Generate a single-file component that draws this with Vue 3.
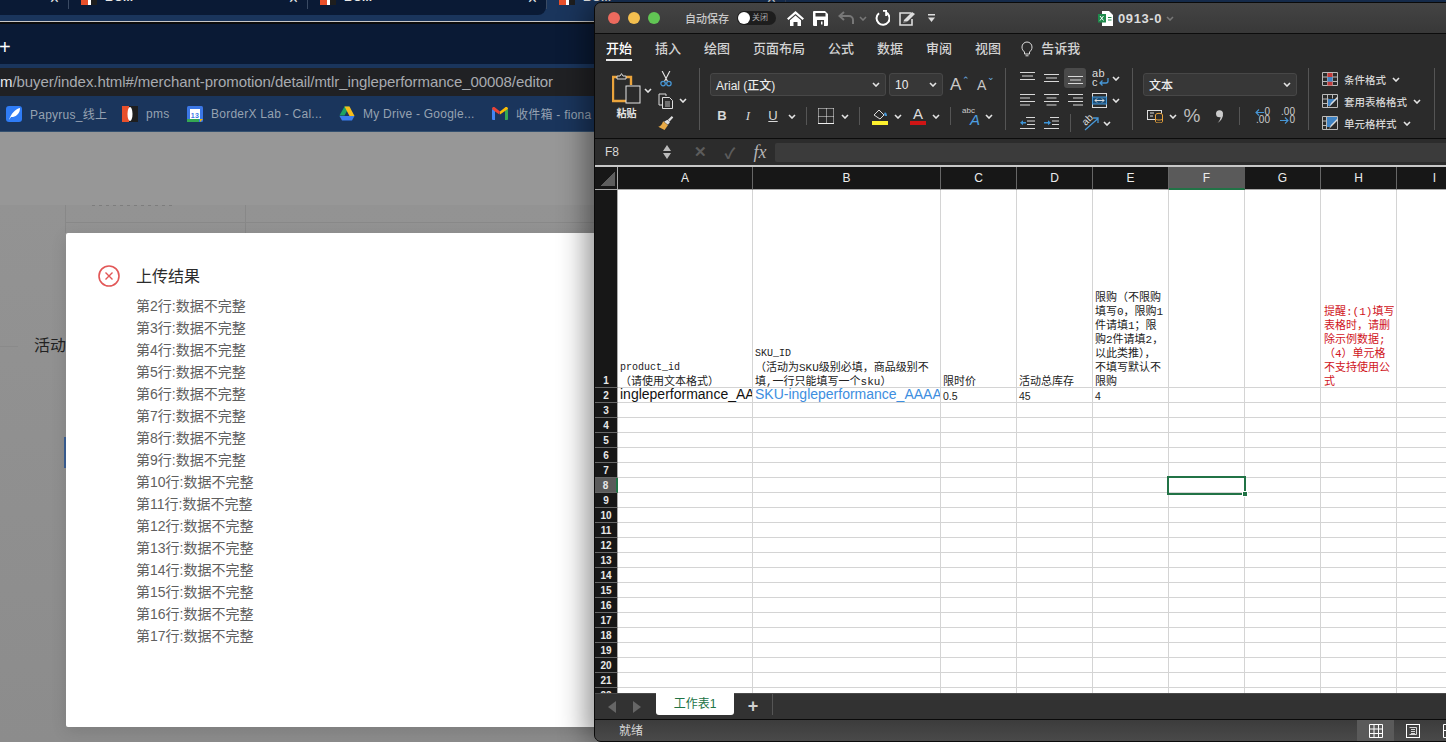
<script setup>
const colHeads = ['A', 'B', 'C', 'D', 'E', 'F', 'G', 'H', 'I']
const errorRows = Array.from({ length: 16 }, (_, i) => `第${i + 2}行:数据不完整`)
const rowNums = Array.from({ length: 22 }, (_, i) => i + 1)
const bookmarks = [
  { kind: 'papyrus', label: 'Papyrus_线上' },
  { kind: 'pms', label: 'pms' },
  { kind: 'cal', label: 'BorderX Lab - Cal...' },
  { kind: 'drive', label: 'My Drive - Google...' },
  { kind: 'gmail', label: '收件箱 - fiona' }
]
const ribbonTabs = ['开始', '插入', '绘图', '页面布局', '公式', '数据', '审阅', '视图']
const header = {
  A: ['product_id', '（请使用文本格式）'],
  B: ['SKU_ID', '（活动为SKU级别必填，商品级别不', '填,一行只能填写一个sku）'],
  C: ['限时价'],
  D: ['活动总库存'],
  E: ['限购（不限购', '填写0，限购1', '件请填1；限', '购2件请填2，', '以此类推），', '不填写默认不', '限购'],
  H: ['提醒:(1)填写', '表格时，请删', '除示例数据;', '（4）单元格', '不支持使用公', '式']
}
const second = { A: 'ingleperformance_AA', B: 'SKU-ingleperformance_AAAA', C: '0.5', D: '45', E: '4' }
const isAscii = (s) => /^[\x00-\x7f]+$/.test(s)
</script>

<template>
  <div class="desk">
    <svg class="defs" aria-hidden="true">
      <symbol id="chev" viewBox="0 0 8 5"><path d="M1 1l3 3 3-3" fill="none" stroke="currentColor" stroke-width="1.6" /></symbol>
      <symbol id="al-top" viewBox="0 0 15 14"><path d="M0 1.5h15M2 5h11M0 8.5h15" stroke="#d8d8d8" /></symbol>
      <symbol id="al-mid" viewBox="0 0 15 14"><path d="M0 3.5h15M2 7h11M0 10.5h15" stroke="#d8d8d8" /></symbol>
      <symbol id="al-bot" viewBox="0 0 15 14"><path d="M0 5.5h15M2 9h11M0 12.5h15" stroke="#d8d8d8" /></symbol>
      <symbol id="al-left" viewBox="0 0 15 14"><path d="M0 1.5h15M0 5h10M0 8.5h15M0 12h10" stroke="#d8d8d8" /></symbol>
      <symbol id="al-center" viewBox="0 0 15 14"><path d="M0 1.5h15M2.500 5h10M0 8.500h15M2.500 12h10" stroke="#d8d8d8" /></symbol>
      <symbol id="al-right" viewBox="0 0 15 14"><path d="M0 1.500h15M5 5h10M0 8.500h15M5 12h10" stroke="#d8d8d8" /></symbol>
      <symbol id="in-less" viewBox="0 0 15 14"><path d="M6 1.500h9M7 5h8M7 8.500h8M0 12.500h15" stroke="#d8d8d8" /><path d="M0 6.800l3-2.500v1.800h3v1.400H3v1.800z" fill="#3d95d8" /></symbol>
      <symbol id="in-more" viewBox="0 0 15 14"><path d="M6 1.500h9M8 5h7M8 8.500h7M0 12.500h15" stroke="#d8d8d8" /><path d="M7 6.800l-3-2.500v1.800H0v1.400h4v1.800z" fill="#3d95d8" /></symbol>
    </svg>

    <div class="browser">
      <div class="tabstrip">
        <div class="tabgroup">
          <div v-for="n in 4" :key="n" class="tab">
            <span class="favicon"><i></i></span>
            <span class="tabtitle">BOM</span>
            <span class="tabclose">×</span>
          </div>
        </div>
      </div>
      <div class="navrow"><span class="plus">+</span></div>
      <div class="addressgap"></div>
      <div class="address"><b>m</b>/buyer/index.html#/merchant-promotion/detail/mtlr_ingleperformance_00008/editor</div>
      <div class="bookmarks">
        <div v-for="b in bookmarks" :key="b.kind" class="bookmark" :class="'bm-' + b.kind">
          <svg v-if="b.kind === 'papyrus'" width="16" height="16" viewBox="0 0 16 16"><rect width="16" height="16" rx="3" fill="#2f7cf6" /><path d="M3 14C5 8 9 3 14 2c0 5-3 8-7 9L5 11z" fill="#fff" /></svg>
          <svg v-else-if="b.kind === 'pms'" width="16" height="16" viewBox="0 0 16 16"><rect width="7" height="16" fill="#e8502b" /><rect x="7" width="9" height="16" fill="#1e1e1e" /><ellipse cx="8" cy="8" rx="2.500" ry="7" fill="#fff" /></svg>
          <svg v-else-if="b.kind === 'cal'" width="16" height="16" viewBox="0 0 16 16"><rect width="16" height="16" rx="1.500" fill="#3b77e6" /><rect x="3" y="3" width="10" height="10" fill="#fff" /><rect y="13" width="12" height="3" fill="#34a853" /><path d="M13 13h3l-3 3z" fill="#f5b400" /><text x="8" y="11.500" text-anchor="middle" class="caltext">13</text></svg>
          <svg v-else-if="b.kind === 'drive'" width="16" height="15" viewBox="0 0 16 15"><path d="M5.500 0h5l-5 9H.5z" fill="#1da462" transform="translate(0 .5)" /><path d="M5.500.5h5l5 9.500h-5z" fill="#f7bd1b" /><path d="M.5 10h15l-2.500 4.500H3z" fill="#3b7ded" /></svg>
          <svg v-else width="16" height="13" viewBox="0 0 16 13"><path d="M0 2l3 1.500V13H1a1 1 0 0 1-1-1z" fill="#4285f4" /><path d="M16 2l-3 1.500V13h2a1 1 0 0 0 1-1z" fill="#34a853" /><path d="M0 2c0-2 2-2.500 3-1.500L8 4.500l-.6 3L3 4.500z" fill="#ea4335" /><path d="M16 2c0-2-2-2.500-3-1.500L8 4.500v3l5-3.500z" fill="#fbbc04" /></svg>
          <span>{{ b.label }}</span>
        </div>
      </div>
      <div class="page">
        <div class="pagehead"></div>
        <div class="pagebody">
          <div class="remnant"></div>
          <div class="tableline"></div>
          <div class="pagerule"></div>
          <div class="activity">活动</div>
          <div class="bluebar"></div>
        </div>
      </div>
    </div>

    <section class="dialog">
      <svg class="erricon" width="22" height="22" viewBox="0 0 22 22"><circle cx="11" cy="11" r="10" fill="none" stroke="#e25757" stroke-width="1.600" /><path d="M7.500 7.500l7 7M14.500 7.500l-7 7" stroke="#e25757" stroke-width="1.400" /></svg>
      <div class="dialogtext">
        <h2>上传结果</h2>
        <p v-for="line in errorRows" :key="line">{{ line }}</p>
      </div>
    </section>

    <section class="excel">
      <header class="titlebar">
        <div class="lights"><i class="red"></i><i class="yellow"></i><i class="green"></i></div>
        <span class="autosave">自动保存</span>
        <span class="toggle"><i></i><em>关闭</em></span>
        <svg class="q q-home" width="17" height="15" viewBox="0 0 17 15"><path d="M8.500 0L17 7.500l-1.500 1.400L8.500 3 1.500 8.900 0 7.500z" fill="#fff" /><path d="M3 9.300l5.500-4.700L14 9.300V15h-3.500v-4h-4v4H3z" fill="#fff" /></svg>
        <svg class="q q-save" width="15" height="15" viewBox="0 0 15 15"><path d="M1 0h11l3 3v11a1 1 0 0 1-1 1H1a1 1 0 0 1-1-1V1a1 1 0 0 1 1-1z" fill="#fff" /><rect x="2.500" y="2" width="10" height="3.500" fill="#3a3a3a" /><rect x="4" y="9" width="7" height="6" fill="#3a3a3a" /><rect x="8" y="10.500" width="1.500" height="3" fill="#fff" /></svg>
        <svg class="q q-undo" width="17" height="14" viewBox="0 0 17 14"><path d="M6 1L1.500 5 6 9M2 5h9a4 4 0 0 1 4 4v4" fill="none" stroke="#777" stroke-width="2" /></svg>
        <svg class="q q-uch" width="8" height="5"><use href="#chev" /></svg>
        <svg class="q q-redo" width="16" height="16" viewBox="0 0 16 16"><path d="M5 3.200A6.500 6.500 0 1 0 12 2.500" fill="none" stroke="#fff" stroke-width="2" /><path d="M9 0h4v6h-1.800V1.800H9z" fill="#fff" /></svg>
        <svg class="q q-edit" width="18" height="15" viewBox="0 0 18 15"><path d="M12 2H1v12h12V8" fill="none" stroke="#ddd" stroke-width="1.600" /><path d="M4 12l1-3 8-8 3 2-8 8z" fill="#ddd" /><path d="M4 11h5" stroke="#3a3a3a" /></svg>
        <svg class="q q-more" width="7" height="8" viewBox="0 0 7 8"><path d="M0 .8h7" stroke="#ddd" stroke-width="1.500" /><path d="M0 3.500h7L3.500 8z" fill="#ddd" /></svg>
        <div class="docname">
          <svg width="15" height="15" viewBox="0 0 15 15"><path d="M4 0h7l4 4v11H4z" fill="#fff" /><rect y="3" width="8" height="8.500" fill="#1f8a4c" /><path d="M2 5l3.500 4.500M5.500 5L2 9.500" stroke="#fff" /><path d="M10 6.500h3.500M10 9h3.500" stroke="#1f8a4c" /></svg>
          <span>0913-0</span>
          <svg class="dimchev" width="8" height="5"><use href="#chev" /></svg>
        </div>
      </header>

      <div class="ribbon">
        <nav class="ribtabs">
          <span v-for="(t, i) in ribbonTabs" :key="t" :class="{ on: i === 0 }">{{ t }}</span>
          <span class="tellme">
            <svg width="12" height="16" viewBox="0 0 12 16"><path d="M3.500 11C2 9.500 1 8.500 1 6a5 5 0 0 1 10 0c0 2.500-1 3.500-2.500 5v2h-5z" fill="none" stroke="#ddd" /><path d="M4.500 14.800h3" stroke="#ddd" /></svg>
            告诉我
          </span>
        </nav>
        <div class="ribbody">
          <div class="group g-clip">
            <div class="paste">
              <svg width="29" height="31" viewBox="0 0 29 31"><path d="M5 4H1v24h16" fill="none" stroke="#eba43c" stroke-width="2.400" /><path d="M14 4h5v8" fill="none" stroke="#eba43c" stroke-width="2.400" /><path d="M5 5V3h3l1.500-2.400L11 3h3v3H5z" fill="#2b2b2b" stroke="#d8d8d8" /><rect x="14" y="13" width="14" height="17" fill="#2b2b2b" stroke="#e6e6e6" /></svg>
              <span>粘贴</span>
            </div>
            <svg class="chev paste-ch"><use href="#chev" /></svg>
            <div class="clip-tools">
              <svg width="12" height="16" viewBox="0 0 12 16"><path d="M2 0l5.500 10.500M10 0L4.500 10.500" stroke="#e0e0e0" stroke-width="1.200" fill="none" /><circle cx="3" cy="13" r="2.300" fill="none" stroke="#4797d6" stroke-width="1.300" /><circle cx="9" cy="13" r="2.300" fill="none" stroke="#4797d6" stroke-width="1.300" /></svg>
              <div class="copyrow">
                <svg width="16" height="16" viewBox="0 0 16 16"><path d="M3 1h5v2M1 1h2M1 1v11h3" fill="none" stroke="#ddd" /><path d="M4.500 4.500h7l3 3v8h-10z" fill="none" stroke="#ddd" /><path d="M7 9h5M7 11h5M7 13h5" stroke="#ddd" stroke-width=".8" /></svg>
                <svg class="chev"><use href="#chev" /></svg>
              </div>
              <svg width="16" height="16" viewBox="0 0 16 16"><path d="M9.500 5l2.500 2.500-2 2.500-4-3z" fill="#e0e0e0" /><path d="M10 5l4-4 1.500 1.500-4 4.500z" fill="#e0e0e0" /><path d="M5 6.500l5 4-3.500 5L0 12c2 0 4-2 5-5.500z" fill="#e8aa46" /></svg>
            </div>
          </div>

          <div class="group g-font">
            <div class="selects">
              <div class="select s-font">Arial (正文)<svg class="chev"><use href="#chev" /></svg></div>
              <div class="select s-size">10<svg class="chev"><use href="#chev" /></svg></div>
              <span class="grow">A<i>⌃</i></span>
              <span class="grow shrink">A<i>⌄</i></span>
            </div>
            <div class="track t-font">
              <span class="fmt bold">B</span>
              <span class="fmt ital">I</span>
              <span class="fmt under">U</span>
              <svg class="chev"><use href="#chev" /></svg>
              <i class="vr"></i>
              <svg width="16" height="16" viewBox="0 0 16 16"><path d="M.5.500h15M.5.500v15M15.500.500v15M8.500.5v15M.5 8.500h15" fill="none" stroke="#eee" stroke-dasharray="1 1" /><path d="M0 15.500h16" stroke="#eee" /></svg>
              <svg class="chev"><use href="#chev" /></svg>
              <i class="vr"></i>
              <svg width="16" height="17" viewBox="0 0 16 17"><path d="M2 7l5-5 5 5-4 4z" fill="none" stroke="#ddd" /><path d="M12 6c1-3 3-1 3 2h-2z" fill="#4797d6" /><rect y="13" width="16" height="4" fill="#fdf02e" /></svg>
              <svg class="chev"><use href="#chev" /></svg>
              <span class="colora">A<i></i></span>
              <svg class="chev"><use href="#chev" /></svg>
              <i class="vr"></i>
              <span class="abc"><small>abc</small><em>A</em></span>
              <svg class="chev"><use href="#chev" /></svg>
            </div>
          </div>

          <div class="group g-align">
            <div class="track t-a1">
              <svg class="al"><use href="#al-top" /></svg>
              <svg class="al"><use href="#al-mid" /></svg>
              <span class="alon"><svg class="al"><use href="#al-bot" /></svg></span>
              <span class="wrap">ab<br />c<svg width="11" height="8" viewBox="0 0 11 8"><path d="M10 0v3a2 2 0 0 1-2 2H2M4.500 2.500L2 5l2.500 2.500" fill="none" stroke="#4797d6" stroke-width="1.300" /></svg></span>
              <svg class="chev"><use href="#chev" /></svg>
            </div>
            <div class="track t-a1">
              <svg class="al"><use href="#al-left" /></svg>
              <svg class="al"><use href="#al-center" /></svg>
              <svg class="al"><use href="#al-right" /></svg>
              <svg width="15" height="15" viewBox="0 0 15 15"><rect x=".5" y=".5" width="14" height="14" fill="none" stroke="#ddd" /><rect x=".5" y="4" width="14" height="7" fill="#1d4f78" stroke="#4797d6" /><path d="M3 7.500h9M5 5.500l-2 2 2 2M10 5.500l2 2-2 2" fill="none" stroke="#ddd" /></svg>
              <svg class="chev"><use href="#chev" /></svg>
            </div>
            <div class="track t-a3">
              <svg class="al"><use href="#in-less" /></svg>
              <svg class="al"><use href="#in-more" /></svg>
              <i class="vr"></i>
              <span class="orient"><em>ab</em><svg width="16" height="14" viewBox="0 0 16 14"><path d="M2 13L15 1.500M10 1h5v5" fill="none" stroke="#4797d6" stroke-width="1.300" /></svg></span>
              <svg class="chev"><use href="#chev" /></svg>
            </div>
          </div>

          <div class="group g-num">
            <div class="select s-num">文本<svg class="chev"><use href="#chev" /></svg></div>
            <div class="track t-num">
              <svg width="16" height="13" viewBox="0 0 16 13"><rect x=".5" y=".5" width="14" height="9" fill="none" stroke="#ddd" /><path d="M3 3h4M3 6h3" stroke="#ddd" /><ellipse cx="12" cy="5" rx="3.500" ry="1.700" fill="#2b2b2b" stroke="#eba43c" /><path d="M8.500 5v6.500c0 2 7 2 7 0V5M8.500 8.500c0 2 7 2 7 0" fill="#2b2b2b" stroke="#eba43c" /></svg>
              <svg class="chev"><use href="#chev" /></svg>
              <span class="pct">%</span>
              <svg width="9" height="13" viewBox="0 0 9 13"><circle cx="4.500" cy="3.800" r="3.500" fill="#ccc" /><path d="M8 4c0 4-2 7-5.500 9C4.500 11 5.500 9 5.500 7z" fill="#ccc" /></svg>
              <i class="vr"></i>
              <span class="dec"><span class="dl"><svg width="9" height="7" viewBox="0 0 9 7"><path d="M9 3.500H1M4 .5l-3 3 3 3" fill="none" stroke="#4797d6" stroke-width="1.100" /></svg>0</span><span class="dl">.00</span></span>
              <span class="dec"><span class="dl">.00</span><span class="dl"><svg width="9" height="7" viewBox="0 0 9 7"><path d="M0 3.500h8M5 .5l3 3-3 3" fill="none" stroke="#4797d6" stroke-width="1.100" /></svg>0</span></span>
            </div>
          </div>

          <div class="group g-style">
            <div class="style-row">
              <svg width="16" height="14" viewBox="0 0 16 14"><path d="M.5.500h15v13H.5zM.5 5h15M.5 9.500h15M5.500.5v13M10.500.5v13" fill="none" stroke="#bbb" /><rect x="5.500" y="1" width="5" height="4" fill="#c23a3a" /><rect x="5.500" y="9.500" width="5" height="4" fill="#c23a3a" /><rect x="5.500" y="5" width="5" height="4.500" fill="#3f83c4" /></svg>
              <span>条件格式</span><svg class="chev"><use href="#chev" /></svg>
            </div>
            <div class="style-row">
              <svg width="16" height="14" viewBox="0 0 16 14"><path d="M.5.500h15v13H.5zM.5 5h6M.5 9.500h6M5.500.5v13M10.500.5v4" fill="none" stroke="#bbb" /><path d="M6 5h9L8 12H6z" fill="#3f83c4" /><path d="M7 13l2-4 6-6 1 1-6 6z" fill="#ddd" /></svg>
              <span>套用表格格式</span><svg class="chev"><use href="#chev" /></svg>
            </div>
            <div class="style-row">
              <svg width="16" height="14" viewBox="0 0 16 14"><path d="M.5.500h15v13H.5zM.5 5h4M.5 9.500h4M4.500.5v13" fill="none" stroke="#bbb" /><path d="M5 1h10v3L8 11H5z" fill="#3f83c4" /><path d="M7 13l2-4 6-6 1 1-6 6z" fill="#ddd" /></svg>
              <span>单元格样式</span><svg class="chev"><use href="#chev" /></svg>
            </div>
          </div>
        </div>
      </div>

      <div class="formula">
        <span class="namebox">F8</span>
        <span class="stepper"><i class="up"></i><i class="down"></i></span>
        <span class="fx-btn x">✕</span>
        <span class="fx-btn ok">✓</span>
        <span class="fx">fx</span>
        <div class="fxinput"></div>
      </div>

      <div class="sheet">
        <div class="gridwrap">
          <div class="corner"><i></i></div>
          <div v-for="c in colHeads" :key="c" class="colhead" :class="{ cur: c === 'F' }">{{ c }}</div>
          <template v-for="r in rowNums" :key="r">
            <div class="rowhead" :class="{ cur: r === 8, first: r === 1 }">{{ r }}</div>
            <div v-for="c in colHeads" :key="c" class="cell" :class="['c-' + c, 'r-' + r]">
              <template v-if="r === 1 && header[c]">
                <div v-for="line in header[c]" :key="line" class="hl" :class="{ ascii: isAscii(line) }">{{ line }}</div>
              </template>
              <template v-else-if="r === 2 && second[c]">{{ second[c] }}</template>
            </div>
          </template>
        </div>
        <div class="selection"><i></i></div>
      </div>

      <div class="sheetbar">
        <i class="tri left"></i>
        <i class="tri right"></i>
        <div class="sheettab">工作表1</div>
        <span class="addsheet">+</span>
        <i class="sb-div"></i>
      </div>

      <footer class="status">
        <span>就绪</span>
        <div class="views">
          <span class="view on"><svg width="14" height="14" viewBox="0 0 14 14"><path d="M.5.500h13v13H.5zM5 .5v13M9.500.5v13M.5 5h13M.5 9.500h13" fill="none" stroke="#fff" /></svg></span>
          <span class="view"><svg width="14" height="14" viewBox="0 0 14 14"><rect x=".5" y=".5" width="13" height="13" fill="none" stroke="#fff" /><path d="M3.500 3.500h7v7h-7M5 5.500h4M5 7.500h4M5 9.500h4" fill="none" stroke="#fff" stroke-width=".8" /></svg></span>
          <span class="view"><svg width="14" height="14" viewBox="0 0 14 14"><path d="M.5.500h13v13H.5zM7 .5v6M.5 6.500h13" fill="none" stroke="#fff" /></svg></span>
        </div>
      </footer>
    </section>
  </div>
</template>

<style>
html, body { margin: 0; padding: 0; overflow: hidden; background: #8f8f8f; }
</style>

<style scoped>
* { box-sizing: border-box; }
.desk { position: relative; width: 1446px; height: 742px; overflow: hidden; font-family: "Liberation Sans", "Noto Sans CJK SC", sans-serif; }
.defs { position: absolute; width: 0; height: 0; }

/* browser */
.browser { display: flex; flex-direction: column; height: 742px; width: 1446px; }
.tabstrip { height: 24px; flex: none; background: #1a355c; border-bottom: 2px solid #0c0c0c; box-shadow: inset 0 -1px 0 #c8c8c8; overflow: hidden; }
.tabgroup { display: flex; align-items: flex-start; width: 546px; height: 15px; background: #0a1a35; border-bottom-right-radius: 8px; position: relative; }
.tab { flex: none; width: 239px; height: 9px; display: flex; align-items: flex-end; padding-left: 12px; padding-right: 9px; border-right: 1px solid #3a4a63; color: #e8e8e8; font-size: 12px; }
.tab:first-child { margin-left: -170px; }
.favicon { width: 16px; height: 5px; flex: none; background: linear-gradient(90deg, #e8502b 0 44%, #fff 44% 62%, #1e1e1e 62%); align-self: flex-start; }
.favicon i { display: none; }
.tabtitle { margin-left: 8px; margin-top: -10px; align-self: flex-start; line-height: 14px; font-weight: 700; }
.tabclose { margin-left: auto; margin-top: -8px; align-self: flex-start; line-height: 14px; font-size: 16px; }
.navrow { height: 40px; flex: none; background: #0a1a35; display: flex; align-items: center; }
.plus { color: #fff; font-size: 20px; line-height: 20px; margin-top: 6px; margin-left: -1px; }
.addressgap { height: 4px; flex: none; background: #1a355c; }
.address { height: 28px; flex: none; background: #202124; color: #a8abb0; font-size: 15px; line-height: 28px; white-space: nowrap; letter-spacing: -.07px; }
.address b { color: #e8eaed; font-weight: 400; }
.bookmarks { height: 36px; flex: none; background: #1a355c; border-bottom: 1px solid #34506f; display: flex; align-items: center; color: #96a2b1; font-size: 12px; letter-spacing: .25px; white-space: nowrap; overflow: hidden; padding-left: 6px; }
.bookmark { display: flex; align-items: center; gap: 8px; flex: none; }
.bm-papyrus { width: 116px; }
.bm-pms { width: 65px; }
.bm-cal { width: 152px; }
.bm-drive { width: 153px; }
.caltext { font: 700 7px "Liberation Sans", sans-serif; fill: #3b77e6; }
.page { flex: 1; display: flex; flex-direction: column; }
.pagehead { height: 73px; flex: none; background: #979797; }
.pagebody { flex: 1; position: relative; background: linear-gradient(180deg, #939393, #8c8c8c); }
.remnant { position: absolute; left: 92px; top: 0; width: 80px; height: 1px; background: repeating-linear-gradient(90deg, #7d7d7d 0 3px, transparent 3px 7px); }
.tableline { position: absolute; left: 65px; top: 0; width: 700px; height: 28px; background: linear-gradient(#888, #888) 0 17px / 100% 1px no-repeat, linear-gradient(#888, #888) 0 0 / 1px 100% no-repeat, linear-gradient(#888, #888) 180px 0 / 1px 100% no-repeat; }
.pagerule { position: absolute; left: 0; top: 141px; width: 18px; height: 1px; background: #8a8a8a; }
.activity { position: absolute; left: 34px; top: 130px; font-size: 16px; line-height: 22px; color: #222; }
.bluebar { position: absolute; left: 64px; top: 232px; width: 3px; height: 31px; background: #3a5f95; }

/* dialog */
.dialog { position: absolute; left: 66px; top: 233px; width: 560px; height: 494px; background: #fff; border-radius: 2px; box-shadow: 0 4px 16px rgba(0,0,0,.12); padding: 32px 0 0 32px; display: flex; gap: 16px; }
.erricon { flex: none; }
.dialogtext h2 { margin: 1px 0 7px; font-size: 16px; line-height: 22px; font-weight: 400; color: #2b2b2b; }
.dialogtext p { margin: 0; font-size: 14px; line-height: 22px; color: #5f5f5f; white-space: nowrap; }

/* excel */
.excel { position: absolute; left: 594px; top: 2px; width: 900px; height: 740px; background: #2b2b2b; border: 1px solid #0a0a0a; border-top-left-radius: 7px; border-bottom-left-radius: 7px; box-shadow: -8px 0 28px rgba(0,0,0,.42); display: flex; flex-direction: column; overflow: hidden; color: #ddd; }
.titlebar { height: 31px; flex: none; position: relative; background: linear-gradient(180deg, #444, #383838); border-bottom: 1px solid #0c0c0c; display: flex; align-items: center; }
.lights { display: flex; gap: 8px; margin-left: 13px; }
.lights i { width: 12px; height: 12px; border-radius: 50%; }
.red { background: #ec6a5e; }
.yellow { background: #f4bf4f; }
.green { background: #61c554; }
.autosave { margin-left: 25px; font-size: 11px; font-weight: 500; color: #c9c9c9; width: 46px; white-space: nowrap; }
.toggle { margin-left: 6px; width: 39px; height: 14px; border-radius: 7px; background: #1d1d1d; position: relative; display: block; }
.toggle i { position: absolute; left: 1px; top: 1px; width: 12px; height: 12px; border-radius: 50%; background: #fff; }
.toggle em { position: absolute; left: 15px; top: 0; font-style: normal; font-size: 8px; line-height: 14px; color: #aaa; white-space: nowrap; }
.q { flex: none; }
.q-home { margin-left: 11px; }
.q-save { margin-left: 9px; }
.q-undo { margin-left: 10px; }
.q-uch { margin-left: 4px; color: #777; }
.q-redo { margin-left: 7px; }
.q-edit { margin-left: 9px; }
.q-more { margin-left: 11px; }
.docname { display: flex; align-items: center; gap: 5px; margin-left: 163px; font-size: 13px; font-weight: 700; color: #dcdcdc; letter-spacing: .6px; }
.dimchev { color: #777; margin-left: -1px; }

.ribbon { height: 105px; flex: none; background: #2b2b2b; border-bottom: 1px solid #0c0c0c; }
.ribtabs { height: 28px; display: flex; gap: 23px; padding-left: 11px; align-items: flex-start; padding-top: 5px; font-size: 13px; line-height: 19px; font-weight: 500; color: #d2d2d2; }
.ribtabs span { display: block; height: 22px; white-space: nowrap; }
.ribtabs .on { color: #fff; border-bottom: 2px solid #e8e8e8; }
.tellme { display: flex !important; align-items: center; gap: 8px; margin-left: -5px; height: 19px !important; position: relative; left: 2px; }
.ribbody { display: flex; align-items: flex-start; padding-top: 6px; }
.group { height: 62px; border-right: 1px solid #555; flex: none; }
.chev { width: 8px; height: 5px; color: #e4e4e4; flex: none; }
.track { display: grid; grid-template-rows: 20px; align-items: center; justify-items: center; height: 20px; flex: none; }
.vr { display: block; width: 1px; height: 18px; background: #555; }

.g-clip { width: 105px; display: flex; padding: 5px 0 0 17px; }
.paste { width: 29px; display: flex; flex-direction: column; align-items: center; gap: 1px; }
.paste span { font-size: 10px; line-height: 14px; font-weight: 700; color: #e6e6e6; white-space: nowrap; margin-top: 2px; }
.paste-ch { margin: 15px 0 0 3px; }
.clip-tools { display: flex; flex-direction: column; align-items: flex-start; margin: -2px 0 0 3px; gap: 6px; padding-left: 3px; flex: none; }
.clip-tools > svg:first-child { margin-left: 2px; }
.copyrow { display: flex; align-items: center; gap: 5px; }

.g-font { width: 306px; padding: 5px 0 0 10px; }
.selects { display: flex; align-items: center; height: 23px; }
.select { height: 23px; background: #373737; border: 1px solid #474747; border-radius: 3px; font-size: 12px; display: flex; align-items: center; justify-content: space-between; padding: 0 5px; color: #ececec; flex: none; font-weight: 500; }
.s-font { width: 176px; }
.s-size { width: 54px; margin-left: 3px; }
.grow { font-size: 17px; line-height: 20px; margin-left: 7px; width: 20px; color: #c8c8c8; position: relative; }
.grow i { position: absolute; left: 12px; top: -1px; font-style: normal; font-size: 9px; color: #6fb3e6; line-height: 12px; }
.shrink { font-size: 14px; margin-left: 7px; }
.shrink i { left: 10px; top: -4px; }
.t-font { grid-template-columns: 24px 28px 22px 16px 12px 28px 10px 18px 24px 12px 28px 8px 20px 22px 14px; margin-top: 10px; }
.fmt { font-size: 13px; color: #d8d8d8; line-height: 16px; }
.bold { font-weight: 700; }
.ital { font-style: italic; font-family: "Liberation Serif", serif; }
.under { text-decoration: underline; }
.colora { display: flex; flex-direction: column; align-items: center; font-size: 15px; line-height: 13px; color: #ddd; }
.colora i { display: block; width: 16px; height: 4px; background: #d01515; margin-top: 1px; }
.abc { position: relative; width: 18px; height: 18px; display: block; }
.abc small { position: absolute; left: 0; top: 0; font-size: 8px; line-height: 7px; color: #ccc; }
.abc em { position: absolute; left: 8px; top: 7px; font-size: 15px; line-height: 11px; color: #4d9fe0; }

.g-align { width: 127px; padding: 0 0 0 9px; display: flex; flex-direction: column; gap: 2px; }
.t-a1 { grid-template-columns: 24px 24px 24px 25px 8px; }
.t-a3 { grid-template-columns: 24px 24px 14px 26px 8px; margin-top: 1px; }
.al { width: 15px; height: 14px; display: block; }
.alon { display: flex; width: 22px; height: 20px; background: #4a4a4a; border-radius: 3px; align-items: center; justify-content: center; }
.wrap { position: relative; font-size: 11px; line-height: 9px; color: #ddd; width: 15px; height: 18px; letter-spacing: .5px; }
.wrap svg { position: absolute; left: 6px; top: 9px; }
.orient { position: relative; width: 17px; height: 14px; display: block; }
.orient em { position: absolute; left: 0; top: -2px; transform: rotate(-45deg); font-size: 10px; font-style: normal; line-height: 12px; color: #ddd; }
.orient svg { position: absolute; left: 1px; top: 1px; }

.g-num { width: 176px; padding: 5px 0 0 10px; }
.s-num { width: 154px; font-size: 12px; }
.t-num { grid-template-columns: 24px 12px 26px 28px 12px 32px 18px; margin-top: 10px; }
.pct { font-size: 19px; line-height: 20px; color: #bdbdbd; }
.dec { width: 18px; display: flex; flex-direction: column; align-items: flex-end; font-size: 10px; line-height: 8px; color: #ccc; }
.dl { display: flex; align-items: center; height: 8px; }

.g-style { width: 126px; padding: 1px 0 0 13px; display: flex; flex-direction: column; gap: 2px; }
.style-row { display: flex; align-items: center; flex: none; height: 20px; font-size: 10.5px; font-weight: 500; color: #d6d6d6; white-space: nowrap; }
.style-row span { margin: 0 6px; }

.formula { height: 28px; flex: none; display: flex; align-items: center; background: #2c2c2c; border-bottom: 2px solid #c8c8c8; position: relative; }
.namebox { font-size: 12px; margin-left: 10px; width: 58px; color: #d8d8d8; }
.stepper { width: 8px; display: flex; flex-direction: column; gap: 2px; }
.stepper i { display: block; width: 0; height: 0; border-left: 4px solid transparent; border-right: 4px solid transparent; }
.stepper .up { border-bottom: 6px solid #bbb; }
.stepper .down { border-top: 6px solid #bbb; }
.fx-btn { color: #5c5c5c; font-size: 15px; font-weight: 700; width: 30px; text-align: center; }
.x { margin-left: 14px; }
.fx { font: italic 18px/18px "Liberation Serif", serif; width: 30px; text-align: center; color: #b5b5b5; }
.fxinput { flex: 1; margin-top: 1px; height: 19px; background: #3b3b3b; border-radius: 2px; }

.sheet { height: 526px; flex: none; position: relative; overflow: hidden; background: #fff; }
.gridwrap { display: grid; grid-template-columns: 23px 135px 188px repeat(7, 76px); grid-template-rows: 23px 198px repeat(21, 15px); }
.corner { background: #171717; border-right: 1px solid #aaa; border-bottom: 1px solid #aaa; position: relative; }
.corner i { position: absolute; left: 5px; top: 4px; width: 15px; height: 15px; background: linear-gradient(135deg, transparent 50%, #5e5e5e 50%); }
.colhead { background: #171717; color: #ececec; font-size: 12px; display: flex; align-items: center; justify-content: center; border-right: 1px solid #666; border-bottom: 1px solid #aaa; }
.colhead.cur { background: #5a5a5a; border-bottom: 2px solid #217346; border-right-color: #5a5a5a; }
.rowhead { background: #171717; color: #e8e8e8; font-size: 10px; font-weight: 700; display: flex; align-items: center; justify-content: center; padding-top: 1px; border-right: 1px solid #aaa; border-bottom: 1px solid #666; overflow: hidden; line-height: 13px; }
.rowhead.first { align-items: flex-end; }
.rowhead.cur { background: #5a5a5a; border-right: 2px solid #217346; }
.cell { border-right: 1px solid #d4d4d4; border-bottom: 1px solid #d4d4d4; background: #fff; overflow: hidden; padding-left: 2px; color: #222; font-size: 10.5px; line-height: 14px; white-space: pre; min-width: 0; }
.r-1 { display: flex; flex-direction: column; justify-content: flex-end; font-size: 11px; font-family: "Liberation Mono", "Noto Sans CJK SC", monospace; }
.c-H.r-1 { color: #d0141c; padding-left: 3px; }
.hl { line-height: 14px; flex: none; }
.hl:last-child { margin-bottom: -2px; }
.hl.ascii { font-size: 10px; }
.r-2 { padding-top: 1px; }
.c-A.r-2 { font-size: 14px; color: #111; line-height: 13px; padding-top: 0; }
.c-B.r-2 { font-size: 14px; color: #3d8ee0; line-height: 13px; padding-top: 0; }
.selection { position: absolute; left: 572px; top: 309px; width: 79px; height: 19px; border: 2px solid #217346; }
.selection i { position: absolute; right: -4px; bottom: -4px; width: 6px; height: 6px; background: #217346; border: 1px solid #fff; }

.sheetbar { height: 27px; flex: none; background: #323232; border-top: 1px solid #4b4b4b; border-bottom: 1px solid #0a0a0a; display: flex; align-items: flex-start; position: relative; }
.tri { display: block; width: 0; height: 0; border-top: 6px solid transparent; border-bottom: 6px solid transparent; margin-top: 7px; flex: none; }
.tri.left { border-right: 8px solid #666; margin-left: 13px; }
.tri.right { border-left: 8px solid #666; margin-left: 17px; }
.sheettab { width: 78px; height: 22px; margin-left: 15px; background: #fff; color: #217346; font-size: 12px; line-height: 23px; text-align: center; border-radius: 0 0 3px 3px; margin-top: -1px; flex: none; }
.addsheet { color: #d0d0d0; font-size: 18px; line-height: 24px; width: 38px; text-align: center; font-weight: 700; }
.sb-div { display: block; width: 1px; height: 21px; background: #555; }
.status { flex: 1; display: flex; justify-content: space-between; align-items: stretch; background: linear-gradient(180deg, #3c3c3c, #4a4a4a); font-size: 12px; color: #d8d8d8; padding-left: 24px; line-height: 22px; }
.views { display: flex; margin-right: 25px; }
.view { display: flex; width: 37px; align-items: center; justify-content: center; }
.view.on { background: #5a5a5a; }
</style>
